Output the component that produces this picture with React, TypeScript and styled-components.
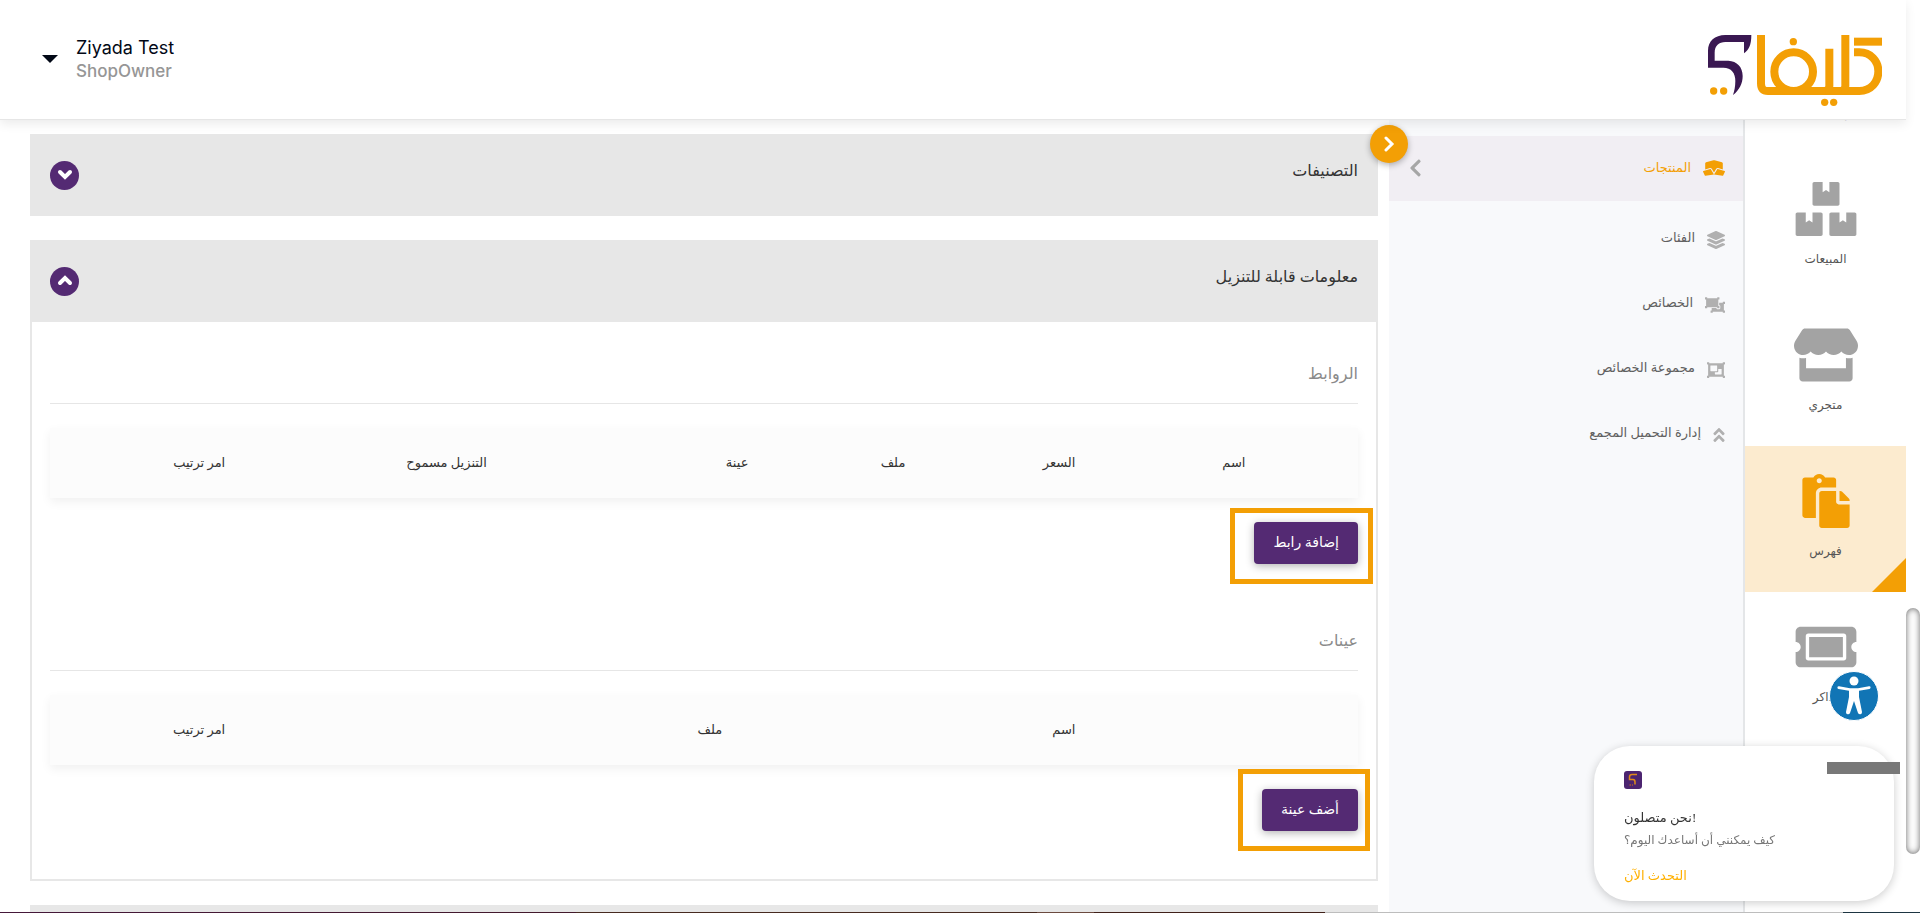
import React from 'react';
import styled, { createGlobalStyle } from 'styled-components';
import {
  FaAngleDoubleUp,
  FaBoxes,
  FaBoxOpen,
  FaChevronLeft,
  FaLayerGroup,
  FaObjectGroup,
  FaObjectUngroup,
  FaPaste,
  FaStore,
  FaTachometerAlt,
  FaTicketAlt,
} from 'react-icons/fa';

const color = {
  orange: '#f39f05',
  purple: '#542a73',
  ink: '#333333',
  muted: '#8a8a8a',
  panel: '#e7e7e7',
  icon: '#a3a3a3',
};

const GlobalStyle = createGlobalStyle`
  * { box-sizing: border-box; }
  body { margin: 0; background: #fff; overflow: hidden; }
  button { font: inherit; border: 0; padding: 0; cursor: pointer; }
  a { text-decoration: none; color: inherit; }
  h2, h3, p { margin: 0; font-weight: 400; }
`;

const Shell = styled.div`
  height: 100vh;
  display: flex;
  flex-direction: column;
  font-family: "Liberation Serif", "DejaVu Sans", serif;
  color: ${color.ink};
`;

const Screen = styled.div`
  flex: 1;
  min-height: 0;
  display: flex;
  direction: ltr;
`;

const Page = styled.div`
  flex: 1;
  min-width: 0;
  display: flex;
  flex-direction: column;
  direction: rtl;
`;

const Header = styled.header`
  height: 120px;
  flex: none;
  z-index: 2;
  display: flex;
  align-items: center;
  justify-content: space-between;
  padding: 0 24px 0 42px;
  background: #fff;
  border-bottom: 1px solid #e6e6e6;
  box-shadow: 0 4px 10px rgba(0, 0, 0, 0.08);
`;

const LogoLink = styled.a`
  display: block;
  margin-top: 22px;
  line-height: 0;
`;

const Profile = styled.button`
  display: flex;
  align-items: center;
  gap: 18px;
  padding-bottom: 2px;
  direction: ltr;
  text-align: left;
  background: none;
  color: #020816;
  font-family: Inter, "Open Sans", sans-serif;
`;

const Caret = styled.span`
  border: 8px solid transparent;
  border-top-color: #020816;
  border-bottom: 0;
`;

const UserName = styled.span`
  display: block;
  font-size: 18px;
  line-height: 24px;
`;

const UserRole = styled.span`
  display: block;
  font-size: 17px;
  font-weight: 500;
  line-height: 22px;
  color: #969696;
`;

const Body = styled.div`
  flex: 1;
  min-height: 0;
  display: flex;
`;

const Rail = styled.nav`
  flex: none;
  width: 163px;
  margin-top: -112px;
  border-left: 2px solid #e4e6e8;
`;

const RailItem = styled.a<{ $active?: boolean }>`
  position: relative;
  display: flex;
  flex-direction: column;
  align-items: center;
  gap: 11px;
  height: 146px;
  padding-top: 28px;
  font-size: 12px;
  line-height: 24px;
  color: #555;
  background: ${(p) => (p.$active ? '#fcebcf' : 'transparent')};

  svg {
    width: 64px;
    height: 54px;
    color: ${(p) => (p.$active ? color.orange : color.icon)};
  }

  &::after {
    content: '';
    display: ${(p) => (p.$active ? 'block' : 'none')};
    position: absolute;
    right: 0;
    bottom: 0;
    border-left: 34px solid transparent;
    border-bottom: 34px solid ${color.orange};
  }
`;

const SubMenu = styled.nav`
  position: relative;
  flex: none;
  width: 354px;
  padding-top: 16px;
  background: #f8f9fb;
`;

const SubItem = styled.a<{ $active?: boolean }>`
  display: flex;
  align-items: center;
  gap: 12px;
  height: 65px;
  margin-bottom: ${(p) => (p.$active ? '5px' : '0')};
  padding: 0 18px 2px 20px;
  font-size: 13px;
  line-height: 24px;
  color: ${(p) => (p.$active ? color.orange : '#606060')};
  background: ${(p) => (p.$active ? '#f1eef3' : 'transparent')};
`;

const SubIcon = styled.span<{ $width: number; $flip?: boolean }>`
  display: flex;
  flex: none;
  padding-top: ${(p) => (p.$flip ? '0' : '4px')};
  transform: ${(p) => (p.$flip ? 'rotate(180deg)' : 'none')};

  svg {
    width: ${(p) => p.$width}px;
    height: 18px;
    color: ${(p) => (p.$flip ? color.orange : '#b0b0b0')};
  }
`;

const SubArrow = styled.span`
  display: flex;
  margin-right: auto;

  svg {
    width: 13px;
    height: 20px;
    color: #a6a6a6;
  }
`;

const CollapseButton = styled.button`
  position: absolute;
  z-index: 1;
  top: 5px;
  left: -19px;
  width: 38px;
  height: 38px;
  display: flex;
  align-items: center;
  justify-content: center;
  border-radius: 50%;
  background: ${color.orange};
  color: #fff;
  box-shadow: 0 2px 6px rgba(0, 0, 0, 0.3);
`;

const Main = styled.main`
  flex: 1;
  min-width: 0;
  overflow: hidden;
  display: flex;
  flex-direction: column;
  gap: 24px;
  padding: 14px 11px 0 30px;
`;

const Card = styled.section`
  flex: none;
`;

const CardHead = styled.div`
  display: flex;
  align-items: center;
  justify-content: space-between;
  height: 82px;
  padding: 0 20px;
  background: ${color.panel};
`;

const CardTitle = styled.h2`
  font-size: 16px;
  line-height: 32px;
  padding-bottom: 8px;
  color: #333;
`;

const ToggleButton = styled.button`
  width: 29px;
  height: 29px;
  display: flex;
  align-items: center;
  justify-content: center;
  border-radius: 50%;
  background: ${color.purple};
  color: #fff;
`;

const CardBody = styled.div`
  display: flex;
  flex-direction: column;
  gap: 49px;
  padding: 24px 18px 48px;
  border: 2px solid ${color.panel};
  border-top: 0;
`;

const Group = styled.section`
  display: flex;
  flex-direction: column;
  align-items: flex-start;
  gap: 24px;
`;

const GroupTitle = styled.h3`
  width: 100%;
  height: 58px;
  padding-top: 12px;
  border-bottom: 1px solid #e6e6e6;
  font-size: 16px;
  line-height: 32px;
  color: ${color.muted};
`;

const Table = styled.table`
  width: 100%;
  table-layout: fixed;
  border-collapse: collapse;
  background: #fcfcfc;
  box-shadow: 0 4px 10px rgba(0, 0, 0, 0.06);

  th, td {
    height: 70px;
    padding: 0 21px 0 0;
    text-align: right;
    font-size: 13px;
    line-height: 24px;
    font-weight: 400;
    white-space: nowrap;
  }
`;

const Highlight = styled.div<{ $inset: string }>`
  position: relative;

  &::after {
    content: '';
    position: absolute;
    inset: ${(p) => p.$inset};
    border: 5px solid ${color.orange};
    pointer-events: none;
  }
`;

const AddButton = styled.button`
  display: block;
  height: 42px;
  padding: 0 19px;
  border-radius: 4px;
  background: ${color.purple};
  color: #fff;
  font-size: 14px;
  line-height: 24px;
  box-shadow: 0 2px 8px rgba(0, 0, 0, 0.3);
`;

const ScrollTrack = styled.div`
  position: relative;
  flex: none;
  width: 14px;
  background: #fff;
`;

const ScrollThumb = styled.div`
  position: absolute;
  top: calc(200% / 3);
  left: 0;
  right: 0;
  height: 27%;
  border-radius: 7px;
  background: #fdfdfd;
  box-shadow: inset 0 0 6px rgba(0, 0, 0, 0.6);
`;

const BottomEdge = styled.div`
  flex: none;
  height: 1px;
  background: linear-gradient(
    to right,
    #45183a 0%,
    #431a2c 30%,
    #472a20 30%,
    #472a20 54%,
    #6b4a3f 54%,
    #6b4a3f 57%,
    #40211a 57%,
    #40211a 69%,
    #bdbdbd 69%,
    #bdbdbd 96%,
    #1d3542 96%
  );
`;

const AccessButton = styled.button`
  position: fixed;
  z-index: 3;
  right: 41px;
  bottom: 192px;
  width: 50px;
  height: 50px;
  border: 1px solid #fff;
  border-radius: 50%;
  background: #1175b5;

  svg {
    display: block;
  }
`;

const Chat = styled.aside`
  position: fixed;
  z-index: 3;
  right: 26px;
  bottom: 12px;
  width: 300px;
  height: 155px;
  padding: 25px 30px 0;
  border-radius: 36px;
  background: #fff;
  box-shadow: 0 2px 10px rgba(0, 0, 0, 0.2);
  direction: ltr;
  font-size: 13px;
  line-height: 22px;
  color: #777;
`;

const ChatLogo = styled.svg`
  display: block;
  margin-bottom: 18px;
`;

const ChatLead = styled.p`
  color: #333;
`;

const ChatText = styled.p`
  font-size: 12px;
`;

const ChatLink = styled.a`
  display: block;
  margin-top: 14px;
  color: #ffb000;
`;

const ChatTag = styled.span`
  position: absolute;
  top: 16px;
  right: -6px;
  width: 73px;
  height: 12px;
  background: #787878;
`;

const chevronPaths = {
  up: 'M3 10L8 5L13 10',
  down: 'M3 5L8 10L13 5',
  right: 'M5 2L11 8L5 14',
};

function Chevron({ to, weight }: { to: keyof typeof chevronPaths; weight: number }) {
  return (
    <svg width="16" height="16" viewBox="0 0 16 16" fill="none" stroke="currentColor" strokeWidth={weight} strokeLinecap="round">
      <path d={chevronPaths[to]} />
    </svg>
  );
}

function Logo() {
  return (
    <svg width="174" height="72" viewBox="144 105 522 216" role="img" aria-label="كليفاي">
      <path
        fill="#3a1852"
        d="M274 105H196C164 105 144 124 144 152V203H190C214 203 226 219 226 243C226 260 223 274 219 285C238 271 248 250 248 228C248 201 231 183 205 182H164V158C164 137 177 126 196 126H252V160C266 150 274 136 274 105Z"
      />
      <g fill="none" stroke={color.orange} strokeWidth="24">
        <path d="M303 105V250Q303 273 324 273H598C632 273 655 247 655 214C655 183 632 157 598 157H582" />
        <circle cx="401" cy="215" r="58" />
        <path d="M508 146V258Q508 270 496 273" />
        <path d="M556 105V258Q556 270 544 273" />
        <path d="M582 125H666" />
      </g>
      <g fill={color.orange}>
        <circle cx="400" cy="125" r="11" />
        <circle cx="494" cy="307" r="11" />
        <circle cx="521" cy="307" r="11" />
        <circle cx="161" cy="273" r="11" />
        <circle cx="191" cy="273" r="11" />
      </g>
    </svg>
  );
}

const railItems = [
  { label: 'لوحة التحكم', icon: <FaTachometerAlt /> },
  { label: 'المبيعات', icon: <FaBoxes /> },
  { label: 'متجري', icon: <FaStore /> },
  { label: 'فهرس', icon: <FaPaste />, active: true },
  { label: 'تذاكر', icon: <FaTicketAlt /> },
];

const subItems = [
  { label: 'الفئات', icon: <FaLayerGroup />, width: 18 },
  { label: 'الخصائص', icon: <FaObjectUngroup />, width: 20 },
  { label: 'مجموعة الخصائص', icon: <FaObjectGroup />, width: 18 },
  { label: 'إدارة التحميل المجمع', icon: <FaAngleDoubleUp />, width: 12 },
];

type Column = { label: string; width: string };

const linkColumns: Column[] = [
  { label: '', width: '7%' },
  { label: 'اسم', width: '13%' },
  { label: 'السعر', width: '13%' },
  { label: 'ملف', width: '12%' },
  { label: 'عينة', width: '20%' },
  { label: 'التنزيل مسموح', width: '20%' },
  { label: 'امر ترتيب', width: '15%' },
];

const sampleColumns: Column[] = [
  { label: '', width: '20%' },
  { label: 'اسم', width: '27%' },
  { label: 'ملف', width: '38%' },
  { label: 'امر ترتيب', width: '15%' },
];

function DataTable({ columns }: { columns: Column[] }) {
  return (
    <Table>
      <colgroup>
        {columns.map((c, i) => (
          <col key={i} style={{ width: c.width }} />
        ))}
      </colgroup>
      <thead>
        <tr>
          {columns.map((c, i) =>
            c.label ? (
              <th key={i} scope="col">
                {c.label}
              </th>
            ) : (
              <td key={i} />
            ),
          )}
        </tr>
      </thead>
    </Table>
  );
}

export default function App() {
  return (
    <Shell lang="ar" dir="rtl">
      <GlobalStyle />
      <Screen>
        <Page>
          <Header>
            <LogoLink href="#home">
              <Logo />
            </LogoLink>
            <Profile type="button">
              <Caret />
              <span>
                <UserName>Ziyada Test</UserName>
                <UserRole>ShopOwner</UserRole>
              </span>
            </Profile>
          </Header>
          <Body>
            <Rail>
              {railItems.map((item) => (
                <RailItem key={item.label} href="#section" $active={item.active}>
                  {item.icon}
                  {item.label}
                </RailItem>
              ))}
            </Rail>
            <SubMenu>
              <CollapseButton type="button" aria-label="طي القائمة">
                <Chevron to="right" weight={3} />
              </CollapseButton>
              <SubItem href="#products" $active>
                <SubIcon $width={22} $flip>
                  <FaBoxOpen />
                </SubIcon>
                المنتجات
                <SubArrow>
                  <FaChevronLeft />
                </SubArrow>
              </SubItem>
              {subItems.map((item) => (
                <SubItem key={item.label} href="#item">
                  <SubIcon $width={item.width}>{item.icon}</SubIcon>
                  {item.label}
                </SubItem>
              ))}
            </SubMenu>
            <Main>
              <Card>
                <CardHead>
                  <CardTitle>التصنيفات</CardTitle>
                  <ToggleButton type="button" aria-label="فتح">
                    <Chevron to="down" weight={4} />
                  </ToggleButton>
                </CardHead>
              </Card>
              <Card>
                <CardHead>
                  <CardTitle>معلومات قابلة للتنزيل</CardTitle>
                  <ToggleButton type="button" aria-label="إغلاق">
                    <Chevron to="up" weight={4} />
                  </ToggleButton>
                </CardHead>
                <CardBody>
                  <Group>
                    <GroupTitle>الروابط</GroupTitle>
                    <DataTable columns={linkColumns} />
                    <Highlight $inset="-14px -15px -20px -24px">
                      <AddButton type="button">إضافة رابط</AddButton>
                    </Highlight>
                  </Group>
                  <Group>
                    <GroupTitle>عينات</GroupTitle>
                    <DataTable columns={sampleColumns} />
                    <Highlight $inset="-20px -12px -20px -24px">
                      <AddButton type="button">أضف عينة</AddButton>
                    </Highlight>
                  </Group>
                </CardBody>
              </Card>
              <Card>
                <CardHead />
              </Card>
            </Main>
          </Body>
        </Page>
        <ScrollTrack>
          <ScrollThumb />
        </ScrollTrack>
      </Screen>
      <BottomEdge dir="ltr" />
      <AccessButton type="button" aria-label="إمكانية الوصول">
        <svg width="48" height="48" viewBox="0 0 48 48" fill="#fff">
          <circle cx="24" cy="9" r="4.5" />
          <path d="M9 14.2L20 16.2H28L39 14.2Q40.500 14 40.600 15.200T39.500 17L29 18.800V25L32 40Q32.200 42 30.500 42.200T28 41L24 29L20 41Q19.300 42.500 17.500 42.200T16 40L19 25V18.800L8.500 17Q7.300 16.700 7.400 15.400T9 14.200Z" />
        </svg>
      </AccessButton>
      <Chat>
        <ChatTag />
        <ChatLogo width="18" height="18" viewBox="0 0 18 18">
          <rect width="18" height="18" rx="3" fill="#4c2470" />
          <path d="M13 3.500H8Q5.500 3.500 5.500 6V8.500H9Q11 8.500 11 11V13.500" fill="none" stroke="#e08a1a" strokeWidth="1.500" />
          <path d="M5.500 14H9" stroke="#a8552e" strokeWidth="1.500" strokeDasharray="1.500 1" />
        </ChatLogo>
        <ChatLead>نحن متصلون!</ChatLead>
        <ChatText>كيف يمكنني أن أساعدك اليوم؟</ChatText>
        <ChatLink href="#chat">التحدث الآن</ChatLink>
      </Chat>
    </Shell>
  );
}
